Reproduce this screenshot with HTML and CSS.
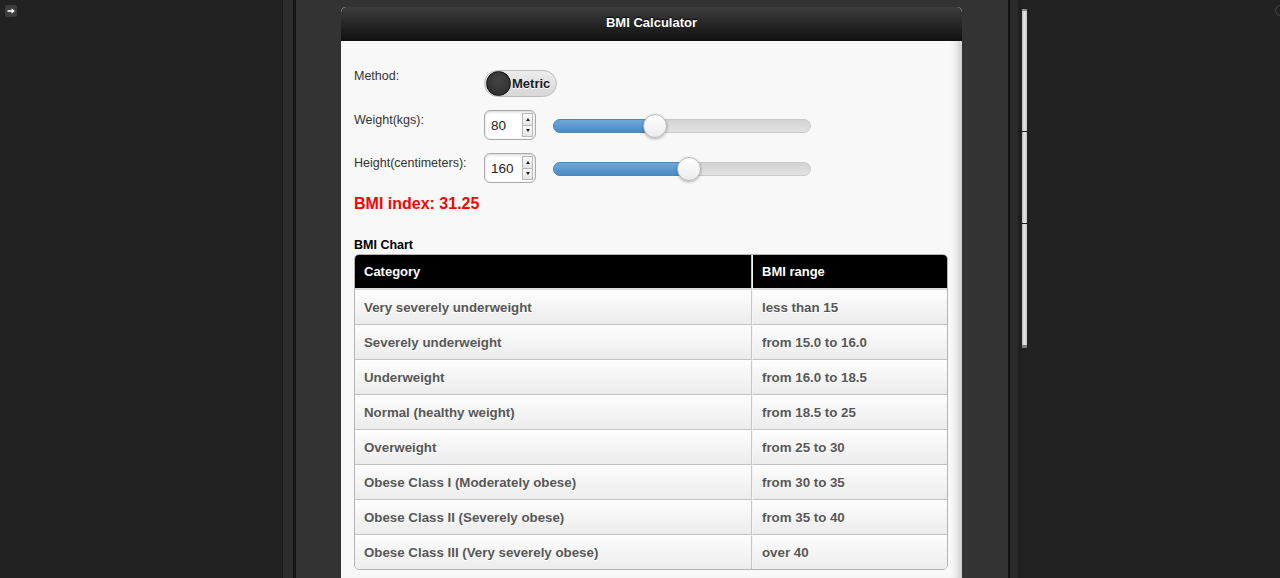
FILE: index.html
```html
<!DOCTYPE html>
<html lang="en">
<head>
<meta charset="utf-8">
<title>BMI Calculator</title>
<link rel="stylesheet" href="styles.css">
</head>
<body>
<div class="desktop">
  <aside class="side side-left">
    <span class="corner-btn">
      <svg width="10" height="10" viewBox="0 0 10 10"><path d="M1.5 5h5" stroke="#fff" stroke-width="1.6" fill="none"/><path d="M5.5 2.2L8.8 5L5.5 7.8z" fill="#fff"/></svg>
    </span>
  </aside>
  <div class="rail rail-left"></div>
  <main class="stage">
    <section class="page">
      <header class="page-header"><h1>BMI Calculator</h1></header>
      <div class="page-content">
        <div class="form-row">
          <label class="field-label field-label-method">Method:</label>
          <div class="toggle"><span class="knob"></span><span class="toggle-text">Metric</span></div>
        </div>
        <div class="form-row">
          <label class="field-label field-label-input">Weight(kgs):</label>
          <div class="spin-input"><span class="spin-value">80</span><span class="spinner"><span class="spin-btn up"></span><span class="spin-btn down"></span></span></div>
          <div class="slider"><div class="slider-fill" style="width:103px"><span class="slider-thumb"></span></div></div>
        </div>
        <div class="form-row">
          <label class="field-label field-label-input">Height(centimeters):</label>
          <div class="spin-input"><span class="spin-value">160</span><span class="spinner"><span class="spin-btn up"></span><span class="spin-btn down"></span></span></div>
          <div class="slider"><div class="slider-fill" style="width:137px"><span class="slider-thumb"></span></div></div>
        </div>
        <p class="bmi-result">BMI index: 31.25</p>
        <h2 class="chart-title">BMI Chart</h2>
        <table class="bmi-table">
          <colgroup><col class="col-cat"><col class="col-range"></colgroup>
          <thead>
            <tr><th>Category</th><th>BMI range</th></tr>
          </thead>
          <tbody>
            <tr><td>Very severely underweight</td><td>less than 15</td></tr>
            <tr><td>Severely underweight</td><td>from 15.0 to 16.0</td></tr>
            <tr><td>Underweight</td><td>from 16.0 to 18.5</td></tr>
            <tr><td>Normal (healthy weight)</td><td>from 18.5 to 25</td></tr>
            <tr><td>Overweight</td><td>from 25 to 30</td></tr>
            <tr><td>Obese Class I (Moderately obese)</td><td>from 30 to 35</td></tr>
            <tr><td>Obese Class II (Severely obese)</td><td>from 35 to 40</td></tr>
            <tr><td>Obese Class III (Very severely obese)</td><td>over 40</td></tr>
          </tbody>
        </table>
      </div>
    </section>
  </main>
  <div class="rail rail-right"></div>
  <div class="splitter">
    <span class="split-seg seg-top"></span>
    <span class="split-seg seg-mid"></span>
    <span class="split-seg seg-bottom"></span>
  </div>
  <aside class="side side-right"><span class="edge-dot"></span></aside>
</div>
</body>
</html>
```

FILE: styles.css
```css
html, body {
  margin: 0;
  padding: 0;
}

body {
  background: #222;
  font-family: "Liberation Sans", Arial, sans-serif;
  height: 578px;
  overflow: hidden;
}

.desktop {
  display: flex;
  height: 578px;
}

.side-left {
  width: 282px;
  flex: none;
  box-sizing: border-box;
  padding: 5px;
}

.corner-btn {
  display: flex;
  align-items: center;
  justify-content: center;
  width: 12px;
  height: 12px;
  border-radius: 3px;
  background: #3d3d3d;
}

.rail-left {
  width: 10px;
  flex: none;
  background: #2c2c2c;
  border-left: 1px solid #1a1a1a;
  border-right: 3px solid #151515;
}

.stage {
  width: 712px;
  flex: none;
  box-sizing: border-box;
  background: #333;
  padding: 7px 0 0 45px;
}

.page {
  width: 621px;
  height: 571px;
  background: #f8f8f8;
  border-radius: 5px 5px 0 0;
  overflow: hidden;
  box-shadow: inset -10px 0 9px -7px rgba(0, 0, 0, 0.22);
}

.page-header {
  height: 34px;
  box-sizing: border-box;
  background: linear-gradient(#3d3d3d, #101010);
  border-radius: 5px 5px 0 0;
}

.page-header h1 {
  margin: 0;
  font-size: 13px;
  font-weight: bold;
  line-height: 32px;
  color: #fff;
  text-align: center;
  text-shadow: 0 -1px 1px #000;
}

.page-content {
  padding: 26px 14px 0 13px;
}

.form-row {
  display: flex;
  align-items: flex-start;
  margin-bottom: 13px;
}

.field-label {
  width: 130px;
  flex: none;
  font-size: 12.5px;
  line-height: 15px;
  color: #333;
}

.field-label-method {
  padding-top: 2px;
}

.field-label-input {
  padding-top: 3px;
}

.toggle {
  display: flex;
  align-items: center;
  width: 73px;
  height: 27px;
  margin-top: 3px;
  box-sizing: border-box;
  border: 1px solid #bdbdbd;
  border-radius: 14px;
  background: linear-gradient(#ececec, #d6d6d6);
  padding-left: 1px;
}

.knob {
  width: 25px;
  height: 25px;
  box-sizing: border-box;
  border-radius: 50%;
  background: radial-gradient(circle at 50% 40%, #444, #2a2a2a);
  border: 1px solid #111;
  flex: none;
}

.toggle-text {
  margin-left: 1px;
  font-size: 13px;
  font-weight: bold;
  color: #1a1a28;
  text-shadow: 0 1px 0 #fff;
}

.spin-input {
  display: flex;
  align-items: center;
  width: 52px;
  height: 30px;
  box-sizing: border-box;
  border: 1px solid #a9a9a9;
  border-radius: 6px;
  background: #fff;
  box-shadow: inset 0 1px 3px rgba(0, 0, 0, 0.18);
  flex: none;
}

.spin-value {
  flex: 1;
  padding-left: 6px;
  font-size: 13.5px;
  color: #222;
}

.spinner {
  display: flex;
  flex-direction: column;
  width: 11px;
  height: 24px;
  margin-right: 2px;
}

.spin-btn {
  flex: 1;
  display: flex;
  align-items: center;
  justify-content: center;
  background: linear-gradient(#fbfbfb, #e4e4e4);
  border: 1px solid #b8b8b8;
}

.spin-btn.down {
  border-top: none;
}

.spin-btn::before {
  content: "";
  border-left: 2.5px solid transparent;
  border-right: 2.5px solid transparent;
}

.spin-btn.up::before {
  border-bottom: 3px solid #222;
}

.spin-btn.down::before {
  border-top: 3px solid #222;
}

.slider {
  width: 258px;
  height: 14px;
  margin: 9px 0 0 17px;
  box-sizing: border-box;
  border: 1px solid #c9c9c9;
  border-radius: 7px;
  background: linear-gradient(#d3d3d3, #e2e2e2);
  flex: none;
  display: flex;
}

.slider-fill {
  position: relative;
  height: 14px;
  margin: -1px 0 0 -1px;
  box-sizing: border-box;
  border: 1px solid #4a88be;
  border-radius: 7px 0 0 7px;
  background: linear-gradient(#6ba9dc, #4b8bc5);
}

.slider-thumb {
  position: absolute;
  right: -12px;
  top: 50%;
  margin-top: -12px;
  width: 24px;
  height: 24px;
  box-sizing: border-box;
  border-radius: 50%;
  border: 1px solid #b5b5b5;
  background: linear-gradient(#ffffff, #ececec);
  box-shadow: 0 1px 3px rgba(0, 0, 0, 0.3);
}

.bmi-result {
  margin: -2px 0 0 0;
  font-size: 16px;
  line-height: 19px;
  font-weight: bold;
  color: #f00;
}

.chart-title {
  margin: 25px 0 1px 0;
  font-size: 12.5px;
  line-height: 15px;
  font-weight: bold;
  color: #000;
}

.bmi-table {
  width: 100%;
  table-layout: fixed;
  border-collapse: separate;
  border-spacing: 0;
  border: 1px solid #b4b4b4;
  border-radius: 5px;
  overflow: hidden;
}

.col-cat {
  width: 397px;
}

.bmi-table th {
  padding: 0 9px;
  text-align: left;
  font-size: 13px;
  font-weight: bold;
  line-height: 33px;
  color: #fff;
  background: #000;
  text-shadow: 0 1px 1px #000;
  border-bottom: 2px solid #dcdcdc;
}

.bmi-table td {
  padding: 0 9px;
  font-size: 13.3px;
  font-weight: bold;
  line-height: 33px;
  color: #575757;
  text-shadow: 0 1px 0 #fff;
  background: linear-gradient(#fdfdfd, #ececec);
  border-top: 1px solid #fff;
  border-bottom: 1px solid #c2c2c2;
  white-space: nowrap;
}

.bmi-table tr:last-child td {
  border-bottom: none;
}

.bmi-table th:first-child,
.bmi-table td:first-child {
  border-right: 1px solid #c6c6c6;
}

.bmi-table th + th,
.bmi-table td + td {
  border-left: 1px solid #f4f4f4;
}

.rail-right {
  width: 12px;
  flex: none;
  background: #2a2a2a;
  border-left: 2px solid #111;
  box-shadow: inset -4px 0 0 #1f1f1f;
}

.splitter {
  width: 5px;
  flex: none;
  margin-top: 9px;
  height: 339px;
  display: flex;
  flex-direction: column;
}

.split-seg {
  display: block;
  background: linear-gradient(90deg, #bcbcbc, #e4e4e4 50%, #c4c4c4);
}

.seg-top {
  height: 120px;
  border-top: 2px solid #8a8a8a;
  border-bottom: 1px solid #1c1c1c;
}

.seg-mid {
  height: 91px;
  border-bottom: 1px solid #1c1c1c;
}

.seg-bottom {
  flex: 1;
  border-bottom: 3px solid #7a7a7a;
}

.side-right {
  flex: 1;
  position: relative;
  overflow: hidden;
}

.edge-dot {
  position: absolute;
  right: -6px;
  top: 5px;
  width: 9px;
  height: 9px;
  border-radius: 50%;
  border: 1px solid #4a4a4a;
}
```
